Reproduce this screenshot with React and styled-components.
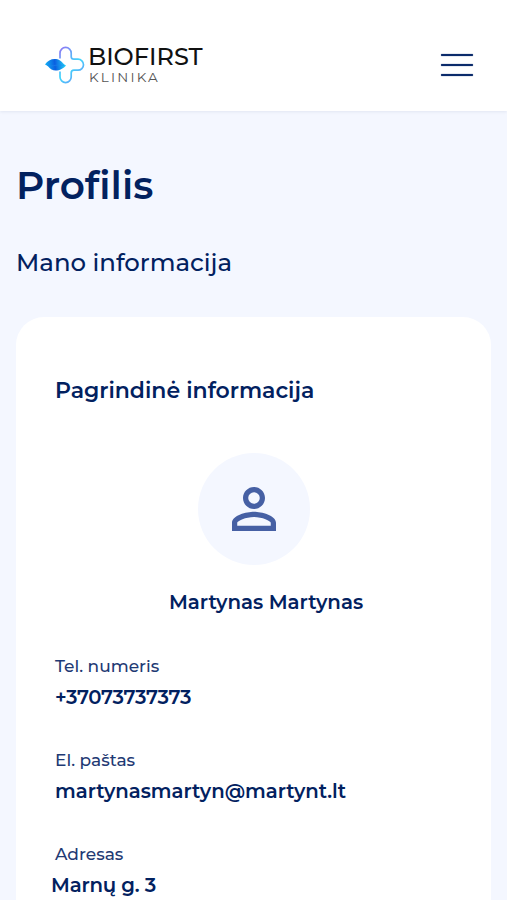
import React from 'react';
import styled, { createGlobalStyle } from 'styled-components';
import { MdPersonOutline } from 'react-icons/md';

const GlobalStyle = createGlobalStyle`
    * {
        box-sizing: border-box;
    }

    body {
        margin: 0;
        background-color: #f4f7ff;
        color: #02215f;
        font-family: Montserrat, Inter, "Noto Sans", sans-serif;
    }
`;

const Page = styled.div`
    height: 900px;
    overflow: hidden;
    display: flex;
    flex-direction: column;
`;

const Header = styled.header`
    flex: none;
    height: 111px;
    padding: 19px 34px 0 45px;
    display: flex;
    align-items: center;
    justify-content: space-between;
    background-color: #ffffff;
    box-shadow: 0 1px 3px rgba(2, 33, 95, 0.08);
`;

const Logo = styled.div`
    display: flex;
    align-items: center;
    gap: 3px;
`;

const LogoText = styled.div`
    display: flex;
    flex-direction: column;
`;

const LogoName = styled.span`
    color: #111111;
    font-size: 24px;
    font-weight: 500;
    line-height: 23px;
    white-space: nowrap;
`;

const LogoSub = styled.span`
    padding-left: 1px;
    color: #555555;
    font-size: 13.5px;
    font-weight: 400;
    line-height: 18px;
    letter-spacing: 2.2px;
`;

const MenuButton = styled.button`
    width: 32px;
    height: 22px;
    padding: 0;
    border: 0;
    background: none;
    display: flex;
    flex-direction: column;
    justify-content: space-between;

    span {
        height: 2px;
        width: 100%;
        background-color: #0b2b6b;
        border-radius: 1px;
        box-shadow: 0 0 1px #0b2b6b;
    }
`;

const Main = styled.main`
    flex: 1;
    min-height: 0;
    padding: 47px 16px 0;
    display: flex;
    flex-direction: column;
`;

const Title = styled.h1`
    margin: 0;
    font-size: 39px;
    font-weight: 600;
    line-height: 54px;
`;

const Subtitle = styled.h2`
    margin: 32px 0 0;
    font-size: 24.4px;
    font-weight: 500;
    line-height: 36px;
`;

const Card = styled.section`
    flex: 1;
    min-height: 0;
    margin-top: 37px;
    padding: 57px 39px 0;
    background-color: #ffffff;
    border-radius: 28px 28px 0 0;
`;

const CardTitle = styled.h3`
    margin: 0;
    font-size: 22px;
    font-weight: 600;
    line-height: 34px;
`;

const Avatar = styled.div`
    width: 112px;
    height: 112px;
    margin: 45px auto 0;
    border-radius: 50%;
    background-color: #f4f7ff;
    color: #4660a4;
    display: flex;
    align-items: center;
    justify-content: center;
`;

const UserName = styled.p`
    margin: 23px 0 0;
    padding-left: 25px;
    font-size: 19.8px;
    font-weight: 600;
    line-height: 28px;
    text-align: center;
`;

const Fields = styled.dl`
    margin: 36px 0 0;
    display: flex;
    flex-direction: column;
    gap: 35px;
`;

const Label = styled.dt`
    color: #1f3a74;
    font-size: 17px;
    font-weight: 500;
    line-height: 28px;
`;

const Value = styled.dd`
    margin: 3px 0 0 ${props => props.$shift || '0'};
    font-size: 19.7px;
    font-weight: 600;
    line-height: 28px;
    letter-spacing: ${props => props.$spacing || 'normal'};
`;

const fields = [
    { label: 'Tel. numeris', value: '+37073737373', spacing: '-0.3px' },
    { label: 'El. paštas', value: 'martynasmartyn@martynt.lt' },
    { label: 'Adresas', value: 'Marnų g. 3', shift: '-4px', spacing: '-0.15px' },
];

const LogoMark = () => (
    <svg width="40" height="39" viewBox="0 0 40 39" fill="none">
        <defs>
            <linearGradient id="cross" x1="14" y1="4" x2="38" y2="30" gradientUnits="userSpaceOnUse">
                <stop offset="0" stopColor="#8c7bf5" />
                <stop offset="0.6" stopColor="#3fd6fb" />
                <stop offset="1" stopColor="#6b9bf8" />
            </linearGradient>
            <linearGradient id="leaf" x1="0" y1="20" x2="20" y2="18" gradientUnits="userSpaceOnUse">
                <stop offset="0" stopColor="#14b4f5" />
                <stop offset="0.5" stopColor="#0a5fe0" />
                <stop offset="1" stopColor="#22cdf8" />
            </linearGradient>
        </defs>
        <path
            d="M15 12.500V7a5.600 5.600 0 0 1 11.200 0V10.500q0 2.700 2.700 2.700H33a5.500 5.500 0 0 1 0 11H28.900q-2.700 0-2.700 2.700V31a5.600 5.600 0 0 1-11.200 0V25.500"
            stroke="url(#cross)"
            strokeWidth="1.700"
        />
        <path d="M0 18.500C3 13.500 10 11.500 15 14.500 17.500 16 18.500 18.500 21 19.500 18 23.500 11 26 6.500 23.500 4 22 3 19.500 0 18.500Z" fill="url(#leaf)" />
        <path d="M2 19C8 21.500 12 17.500 19 19.500" stroke="#1f86ee" strokeWidth="0.500" />
    </svg>
);

const Field = props => (
    <div>
        <Label>{props.label}</Label>
        <Value $spacing={props.spacing} $shift={props.shift}>{props.value}</Value>
    </div>
);

const App = () => {
    return (
        <>
            <GlobalStyle />
            <Page>
                <Header>
                    <Logo>
                        <LogoMark />
                        <LogoText>
                            <LogoName>BIOFIRST</LogoName>
                            <LogoSub>KLINIKA</LogoSub>
                        </LogoText>
                    </Logo>
                    <MenuButton aria-label="Meniu">
                        <span />
                        <span />
                        <span />
                    </MenuButton>
                </Header>
                <Main>
                    <Title>Profilis</Title>
                    <Subtitle>Mano informacija</Subtitle>
                    <Card>
                        <CardTitle>Pagrindinė informacija</CardTitle>
                        <Avatar>
                            <MdPersonOutline size={66} />
                        </Avatar>
                        <UserName>Martynas Martynas</UserName>
                        <Fields>
                            {fields.map(field => (
                                <Field key={field.label} {...field} />
                            ))}
                        </Fields>
                    </Card>
                </Main>
            </Page>
        </>
    );
};

export default App;
